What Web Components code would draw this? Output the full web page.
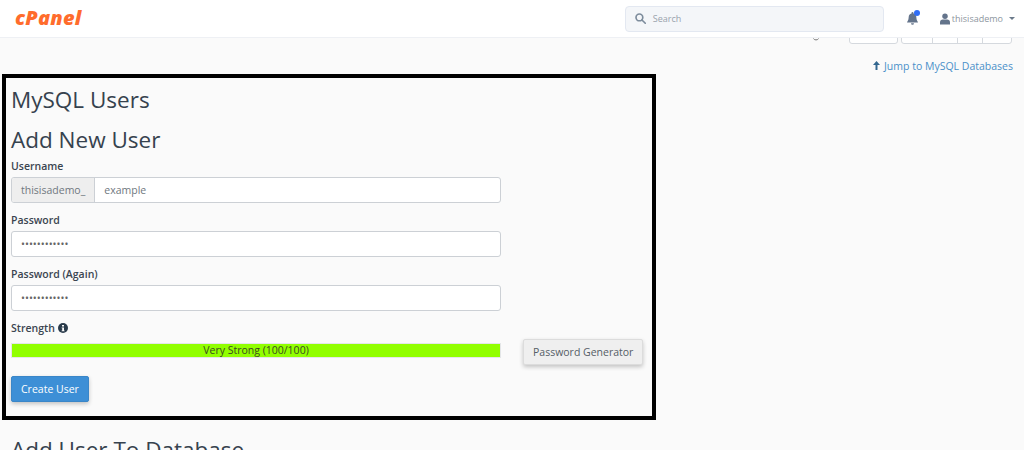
<!DOCTYPE html>
<html lang="en">
<head>
<meta charset="utf-8">
<title>MySQL Users</title>
<style>
  html, body { margin: 0; height: 450px; overflow: hidden; background: #fafafa; }
  body { font-family: "Open Sans", "Liberation Sans", sans-serif; font-size: 10.5px; color: #3a4550; }
</style>
</head>
<body>
<app-header user="thisisademo"></app-header>
<page-toolbar></page-toolbar>
<jump-link>Jump to MySQL Databases</jump-link>
<outlined-box>
  <section-title>MySQL Users</section-title>
  <section-title class="tight">Add New User</section-title>
  <form-field label="Username" prefix="thisisademo_" value="example"></form-field>
  <form-field label="Password" value="••••••••••••" secret></form-field>
  <form-field label="Password (Again)" value="••••••••••••" secret></form-field>
  <strength-meter score="100" text="Very Strong (100/100)"></strength-meter>
  <app-button primary>Create User</app-button>
</outlined-box>
<section-title class="next">Add User To Database</section-title>

<script>
class AppHeader extends HTMLElement {
  constructor() {
    super();
    this.attachShadow({ mode: "open" });
  }

  connectedCallback() {
    this.shadowRoot.innerHTML = `
      <style>
        :host {
          display: flex;
          align-items: center;
          box-sizing: border-box;
          height: 38px;
          padding: 0 9px 0 15px;
          background: #fff;
          border-bottom: 1px solid #eef0f4;
        }
        .logo {
          font: italic 800 20px/1 "Open Sans", sans-serif;
          letter-spacing: 0.2px;
          color: #ff6c2c;
          margin-right: auto;
          margin-top: -1px;
        }
        .search {
          display: flex;
          align-items: center;
          gap: 7px;
          box-sizing: border-box;
          width: 259px;
          height: 26px;
          padding: 0 9px;
          margin-right: 23px;
          background: #f4f6f9;
          border: 1px solid #e3e8f1;
          border-radius: 4px;
          color: #9aa3ad;
          font-size: 9px;
        }
        .bell { position: relative; display: flex; margin-right: 22px; }
        .bell i {
          position: absolute;
          top: -2px;
          right: -2px;
          width: 6px;
          height: 6px;
          border-radius: 50%;
          background: #2f6df6;
        }
        .user { display: flex; align-items: center; gap: 2px; font-size: 9px; color: #8d96a0; }
        .caret {
          margin-left: 4px;
          border: 3px solid transparent;
          border-top-color: #6b7a8a;
          border-bottom: 0;
        }
      </style>
      <span class="logo">cPanel</span>
      <label class="search">
        <svg width="11" height="11" viewBox="0 0 12 12" fill="none" stroke="#7d8c9c" stroke-width="1.8"><circle cx="4.8" cy="4.8" r="3.7"/><path d="M7.6 7.6 11.2 11.2" stroke-linecap="round"/></svg>
        Search
      </label>
      <span class="bell">
        <svg width="11" height="13" viewBox="0 0 11 13" fill="#64748b"><path d="M5.5 0a1 1 0 0 1 1 1v.4A3.8 3.8 0 0 1 9.3 5c0 3.4 1.7 4.5 1.7 5.4H0c0-.9 1.7-2 1.7-5.4a3.8 3.8 0 0 1 2.8-3.6V1a1 1 0 0 1 1-1ZM4 11.2h3a1.5 1.5 0 0 1-3 0Z"/></svg>
        <i></i>
      </span>
      <span class="user">
        <svg width="10" height="12" viewBox="0 0 11 12" fill="#64748b"><circle cx="5.5" cy="3" r="3"/><path d="M0 12V9.6C0 7.8 1.4 6.6 3 6.6h5c1.6 0 3 1.2 3 3V12Z"/></svg>
        ${this.getAttribute("user")}
        <span class="caret"></span>
      </span>
    `;
  }
}

// the page is scrolled under the header, only the bottom of this row shows
class PageToolbar extends HTMLElement {
  constructor() {
    super();
    this.attachShadow({ mode: "open" });
  }

  connectedCallback() {
    this.shadowRoot.innerHTML = `
      <style>
        :host {
          display: flex;
          justify-content: flex-end;
          align-items: flex-end;
          height: 6px;
          padding-right: 12px;
          overflow: hidden;
        }
        .hook { margin-right: 30px; align-self: flex-start; }
        .group {
          display: flex;
          flex: none;
          box-sizing: border-box;
          height: 20px;
          border: 1px solid #d5d9de;
          border-radius: 3px;
          background: #fff;
        }
        .size { width: 49px; margin-right: 3px; }
        .group span { box-sizing: border-box; width: 25px; border-left: 1px solid #d5d9de; }
        .group span:first-child { width: 30px; border-left: 0; }
        .group span:last-child { width: 29px; }
      </style>
      <svg class="hook" width="6" height="3" viewBox="0 0 6 3" fill="none" stroke="#777"><path d="M.5.5C1 2.4 5 2.4 5.5.5"/></svg>
      <div class="group size"></div>
      <div class="group"><span></span><span></span><span></span><span></span></div>
    `;
  }
}

class JumpLink extends HTMLElement {
  constructor() {
    super();
    this.attachShadow({ mode: "open" });
  }

  connectedCallback() {
    this.shadowRoot.innerHTML = `
      <style>
        :host {
          display: flex;
          justify-content: flex-end;
          align-items: center;
          gap: 4px;
          height: 17px;
          margin-top: 13px;
          padding-right: 11px;
          font-size: 10.5px;
          color: #4a90c9;
        }
      </style>
      <svg width="7" height="9" viewBox="0 0 7 9" fill="#33678f"><path d="M3.5 0 7 4H4.5v5h-2V4H0Z"/></svg>
      <slot></slot>
    `;
  }
}

class OutlinedBox extends HTMLElement {
  constructor() {
    super();
    this.attachShadow({ mode: "open" });
  }

  connectedCallback() {
    this.shadowRoot.innerHTML = `
      <style>
        :host {
          display: block;
          box-sizing: border-box;
          width: 654px;
          height: 346px;
          margin: 0 0 0 2px;
          padding: 4px 5px 0;
          border: 4px solid #000;
        }
      </style>
      <slot></slot>
    `;
  }
}

class SectionTitle extends HTMLElement {
  constructor() {
    super();
    this.attachShadow({ mode: "open" });
  }

  connectedCallback() {
    this.shadowRoot.innerHTML = `
      <style>
        :host {
          display: block;
          height: 36px;
          margin-bottom: 4px;
          font-size: 22.5px;
          line-height: 36px;
          color: #36424e;
        }
        :host(.tight) { margin-bottom: 1px; }
        :host(.next) { margin: 12px 0 0 11px; }
      </style>
      <slot></slot>
    `;
  }
}

class FormField extends HTMLElement {
  constructor() {
    super();
    this.attachShadow({ mode: "open" });
  }

  connectedCallback() {
    const prefix = this.getAttribute("prefix");
    this.shadowRoot.innerHTML = `
      <style>
        :host { display: block; width: 490px; height: 54px; }
        .label { height: 14px; margin-bottom: 4px; font-size: 10.5px; line-height: 14px; font-weight: 600; }
        .box {
          display: flex;
          box-sizing: border-box;
          height: 26px;
          background: #fff;
          border: 1px solid #ccd0d5;
          border-radius: 3px;
          font-size: 10.5px;
          line-height: 24px;
          color: #707880;
          overflow: hidden;
        }
        .prefix { padding: 0 9px; background: #eee; border-right: 1px solid #ccd0d5; }
        .value { padding: 0 9px; }
        :host([secret]) .value { color: #666; }
      </style>
      <div class="label">${this.getAttribute("label")}</div>
      <div class="box">
        ${prefix ? `<span class="prefix">${prefix}</span>` : ""}
        <span class="value">${this.getAttribute("value")}</span>
      </div>
    `;
  }
}

class StrengthMeter extends HTMLElement {
  constructor() {
    super();
    this.attachShadow({ mode: "open" });
  }

  connectedCallback() {
    this.shadowRoot.innerHTML = `
      <style>
        :host {
          display: grid;
          grid-template-columns: 490px auto;
          grid-template-rows: 22px 15px;
          column-gap: 22px;
          align-items: start;
          justify-items: start;
          height: 55px;
        }
        .label { display: flex; align-items: center; gap: 3px; height: 14px; font-weight: 600; }
        .bar {
          grid-column: 1;
          justify-self: stretch;
          box-sizing: border-box;
          height: 15px;
          background: #91ff00;
          border: 1px solid #e4e6e8;
          font-size: 10.5px;
          line-height: 13px;
          text-align: center;
          color: #3a4a20;
        }
        app-button { grid-column: 2; grid-row: 1 / 3; margin-top: 18px; }
      </style>
      <div class="label">
        Strength
        <svg width="10" height="10" viewBox="0 0 10 10"><circle cx="5" cy="5" r="5" fill="#293a4a"/><path d="M4 2h2v1.5H4ZM3.6 4.4H6v3h.6v.9H3.6v-.9h.6V5.3h-.6Z" fill="#fafafa"/></svg>
      </div>
      <div class="bar">${this.getAttribute("text")}</div>
      <app-button>Password Generator</app-button>
    `;
  }
}

class AppButton extends HTMLElement {
  constructor() {
    super();
    this.attachShadow({ mode: "open" });
  }

  connectedCallback() {
    this.shadowRoot.innerHTML = `
      <style>
        :host {
          display: inline-block;
          box-sizing: border-box;
          height: 26px;
          padding: 0 9px;
          font-size: 10.5px;
          line-height: 24px;
          white-space: nowrap;
          color: #555d66;
          background: #efefef;
          border: 1px solid #dcdcdc;
          border-radius: 2px;
          box-shadow: 0 2px 4px rgba(0, 0, 0, 0.22);
        }
        :host([primary]) {
          color: #fff;
          background: #3d8fd6;
          border-color: #3a86c8;
        }
      </style>
      <slot></slot>
    `;
  }
}

customElements.define("app-header", AppHeader);
customElements.define("page-toolbar", PageToolbar);
customElements.define("jump-link", JumpLink);
customElements.define("outlined-box", OutlinedBox);
customElements.define("section-title", SectionTitle);
customElements.define("form-field", FormField);
customElements.define("strength-meter", StrengthMeter);
customElements.define("app-button", AppButton);
</script>
</body>
</html>
